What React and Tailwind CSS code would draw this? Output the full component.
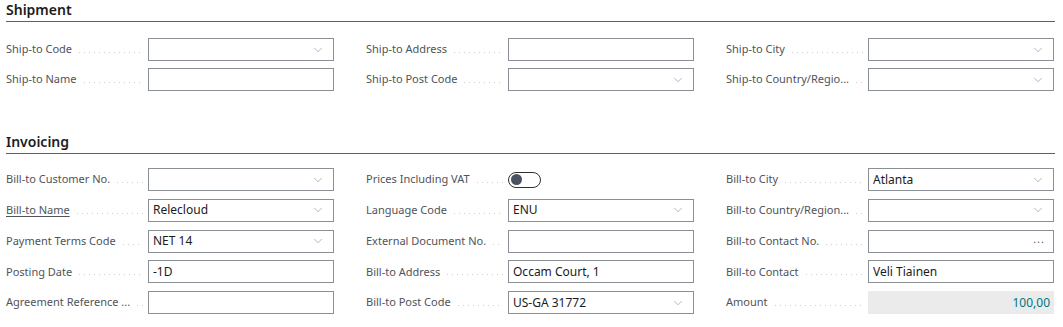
import { ChevronDown } from "lucide-react";

const shipment = [
  { label: "Ship-to Code", type: "select" },
  { label: "Ship-to Address", type: "text" },
  { label: "Ship-to City", type: "select" },
  { label: "Ship-to Name", type: "text" },
  { label: "Ship-to Post Code", type: "select" },
  { label: "Ship-to Country/Regio...", type: "select" },
];

const invoicing = [
  { label: "Bill-to Customer No.", type: "select" },
  { label: "Prices Including VAT", type: "toggle" },
  { label: "Bill-to City", type: "select", value: "Atlanta" },
  { label: "Bill-to Name", type: "select", value: "Relecloud", link: true },
  { label: "Language Code", type: "select", value: "ENU" },
  { label: "Bill-to Country/Region...", type: "select" },
  { label: "Payment Terms Code", type: "select", value: "NET 14" },
  { label: "External Document No.", type: "text" },
  { label: "Bill-to Contact No.", type: "lookup" },
  { label: "Posting Date", type: "text", value: "-1D" },
  { label: "Bill-to Address", type: "text", value: "Occam Court, 1" },
  { label: "Bill-to Contact", type: "text", value: "Veli Tiainen" },
  { label: "Agreement Reference ...", type: "text" },
  { label: "Bill-to Post Code", type: "select", value: "US-GA 31772" },
  { label: "Amount", type: "amount", value: "100,00" },
];

function Control({ type, value }) {
  if (type === "toggle") {
    return (
      <div className="h-[23px] flex items-center">
        <span className="w-[33px] h-[16px] rounded-full border border-[#323130] flex items-center px-[2px]">
          <span className="w-[11px] h-[11px] rounded-full bg-[#4b5263]" />
        </span>
      </div>
    );
  }
  if (type === "amount") {
    return (
      <div className="h-[23px] bg-[#ebebeb] flex items-center justify-end pr-[4px] text-[12px] text-[#00777c]">
        {value}
      </div>
    );
  }
  return (
    <div className="h-[23px] border border-[#8a8f96] bg-white flex items-center pl-[4px] pr-[8px] text-[12px] text-[#1b1b1b]">
      <span className="flex-1 truncate">{value}</span>
      {type === "select" && (
        <ChevronDown className="w-[14px] h-[14px] text-[#8a8f96]" strokeWidth={1.1} />
      )}
      {type === "lookup" && (
        <span className="text-[#5a5f66] text-[11px] tracking-[1px] -mt-[4px]">...</span>
      )}
    </div>
  );
}

function Field({ label, type, value, link }) {
  return (
    <div className="flex items-center">
      <div className="w-[142px] flex items-center pr-[5px]">
        <span
          className={`text-[11px] whitespace-nowrap text-[#505359] ${
            link ? "underline underline-offset-2 text-[#3b3f45]" : ""
          }`}
        >
          {label}
        </span>
        <span className="flex-1 ml-[7px] h-px mt-[6px] bg-[linear-gradient(to_right,#cdd0d4_1px,transparent_1px)] bg-[length:5px_1px] bg-repeat-x" />
      </div>
      <div className="w-[186px]">
        <Control type={type} value={value} />
      </div>
    </div>
  );
}

function Section({ title, fields, rowGap, gridTop, className = "" }) {
  return (
    <section className={className}>
      <h2 className="text-[14px] font-semibold text-[#1b1b1b] leading-[18px] pb-[2px] border-b border-[#5a616b]">
        {title}
      </h2>
      <div className={`grid grid-cols-[360px_360px_328px] ${gridTop} ${rowGap}`}>
        {fields.map((f) => (
          <Field key={f.label} {...f} />
        ))}
      </div>
    </section>
  );
}

export default function App() {
  return (
    <div
      className="w-[1063px] h-[327px] bg-white pl-[6px] pr-[8px] pt-[1px]"
      style={{ fontFamily: '"Noto Sans", "Open Sans", sans-serif' }}
    >
      <Section title="Shipment" fields={shipment} rowGap="gap-y-[7px]" gridTop="mt-[16px]" />
      <Section
        title="Invoicing"
        fields={invoicing}
        rowGap="gap-y-[7.75px]"
        gridTop="mt-[14px]"
        className="mt-[42px]"
      />
    </div>
  );
}
